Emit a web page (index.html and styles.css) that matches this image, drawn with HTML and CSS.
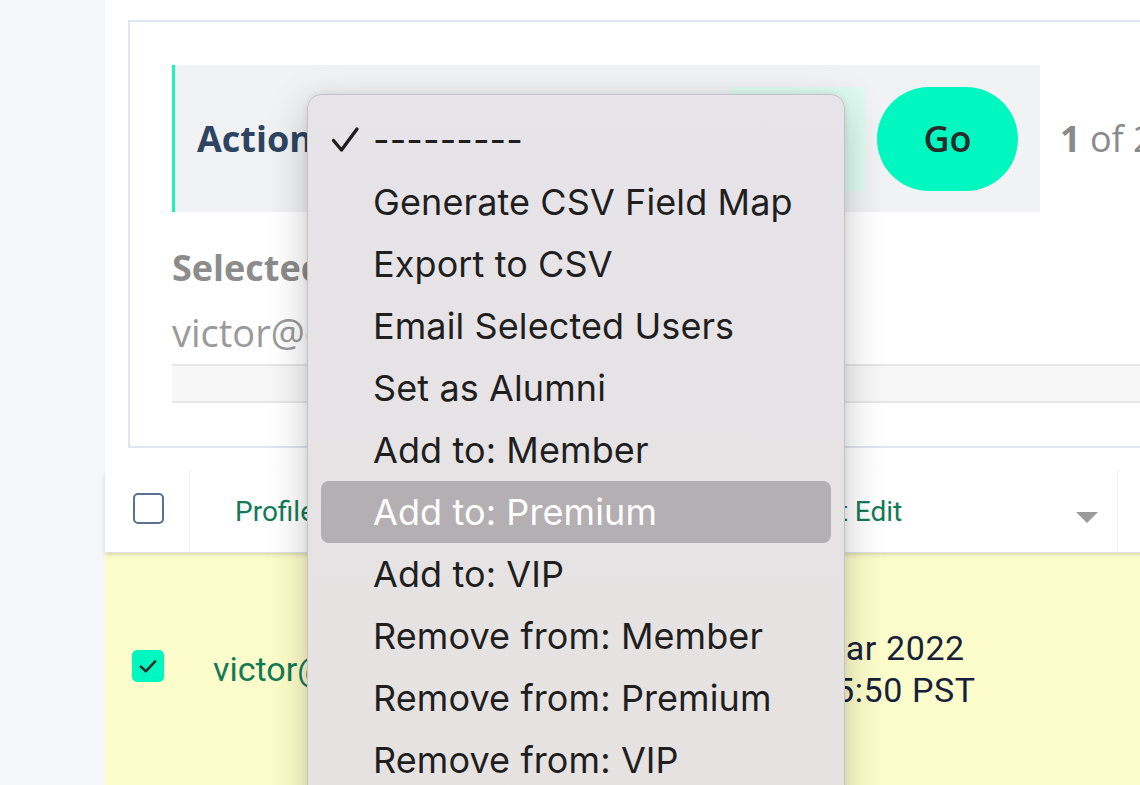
FILE: index.html
```html
<!DOCTYPE html>
<html lang="en">
<head>
<meta charset="utf-8">
<title>Users</title>
<link rel="stylesheet" href="styles.css">
</head>
<body>
<div class="page">
  <aside class="sidebar"></aside>
  <main class="main">
    <section class="card">
      <div class="toolbar">
        <div class="actionbar">
          <span class="action-label">Action:</span>
          <span class="select"></span>
          <button class="go">Go</button>
        </div>
        <div class="counter"><b>1</b> of 2 selected</div>
      </div>
      <h2 class="selected-title">Selected users</h2>
      <div class="selected-email">victor@example.com</div>
      <div class="selected-box"></div>
    </section>

    <div class="thead">
      <div class="th th-check"><span class="cb"></span></div>
      <div class="th th-profile">Profile</div>
      <div class="th th-edit"><span>Last Edit</span><span class="tri"></span></div>
      <div class="th th-rest"></div>
    </div>

    <div class="trow">
      <div class="td td-check"><span class="cb cb-on"><svg viewBox="0 0 20 20" width="22" height="22"><path d="M3.5 10.5 L8 14.8 L16.5 5.8" fill="none" stroke="#2b2b2b" stroke-width="2.3" stroke-linecap="round" stroke-linejoin="round"/></svg></span></div>
      <div class="td td-profile">victor@example.com</div>
      <div class="td td-date"><span>12 Mar 2022</span><span>14:45:50 PST</span></div>
    </div>
  </main>

  <div class="menu">
    <div class="item checked">
      <svg class="check" viewBox="0 0 30 28" width="30" height="28"><path d="M3.5 14.5 L11.5 24 L27 3" fill="none" stroke="#1f1f1f" stroke-width="3.4" stroke-linecap="round" stroke-linejoin="round"/></svg>
      ---------
    </div>
    <div class="item">Generate CSV Field Map</div>
    <div class="item">Export to CSV</div>
    <div class="item">Email Selected Users</div>
    <div class="item">Set as Alumni</div>
    <div class="item">Add to: Member</div>
    <div class="item active">Add to: Premium</div>
    <div class="item">Add to: VIP</div>
    <div class="item">Remove from: Member</div>
    <div class="item">Remove from: Premium</div>
    <div class="item">Remove from: VIP</div>
  </div>
</div>
</body>
</html>
```

FILE: styles.css
```css
* { box-sizing: border-box; }
html, body { margin: 0; padding: 0; }
body {
  width: 1140px;
  height: 785px;
  overflow: hidden;
  background: #ffffff;
  font-family: "Open Sans", "Liberation Sans", sans-serif;
}
.page {
  display: flex;
  width: 1140px;
  height: 785px;
  position: relative;
  overflow: hidden;
}
.sidebar {
  width: 105px;
  flex: none;
  background: #f5f6fa;
}
.main {
  flex: none;
  width: 1300px;
  background: #fff;
  padding-top: 20px;
  display: flex;
  flex-direction: column;
}
.card {
  margin-left: 23px;
  width: 1250px;
  border: 2px solid #dfe6f1;
  padding: 43px 0 43px 42px;
}
.toolbar {
  display: flex;
  align-items: center;
  gap: 20px;
}
.actionbar {
  flex: none;
  width: 868px;
  height: 147px;
  background: #f1f2f4;
  border-left: 3px solid #1ff2bb;
  display: flex;
  align-items: center;
  padding: 0 22px;
}
.action-label {
  font-weight: 700;
  font-size: 36px;
  color: #2e4461;
  flex: 1;
}
.select {
  flex: none;
  width: 136px;
  height: 104px;
  background: #dffbf1;
}
.go {
  flex: none;
  margin-left: 11px;
  width: 141px;
  height: 104px;
  border: none;
  border-radius: 52px;
  background: #00f8c0;
  font-family: "Open Sans", "Liberation Sans", sans-serif;
  font-weight: 600;
  font-size: 36px;
  color: #2a2a2a;
  padding: 0;
}
.counter {
  flex: none;
  font-size: 36px;
  color: #8a8a8a;
  white-space: nowrap;
}
.counter b { font-weight: 700; }
.selected-title {
  margin: 32px 0 0;
  font-size: 36px;
  line-height: 48px;
  font-weight: 700;
  color: #8c8c8c;
}
.selected-email {
  margin-top: 16px;
  font-size: 38px;
  line-height: 48px;
  color: #9a9a9a;
}
.selected-box {
  margin-top: 8px;
  height: 39px;
  background: #f7f7f7;
  border-top: 2px solid #e6e6e6;
  border-bottom: 2px solid #e6e6e6;
}

.thead {
  margin-top: 22px;
  height: 82px;
  display: flex;
  background: #fff;
  box-shadow: 0 3px 4px rgba(0,0,0,0.14);
  position: relative;
  z-index: 1;
  font-family: Roboto, "Liberation Sans", sans-serif;
}
.th {
  display: flex;
  align-items: center;
  font-size: 28px;
  color: #137a57;
}
.th-check {
  width: 85px;
  padding-left: 28px;
  border-right: 1px solid #f1f1f1;
  padding-bottom: 5px;
}
.th-profile {
  width: 588px;
  padding-left: 45px;
}
.th-edit {
  width: 340px;
  padding-left: 16px;
  padding-right: 19px;
  justify-content: space-between;
  border-right: 1px solid #f1f1f1;
}
.tri {
  width: 0;
  height: 0;
  border-left: 11.5px solid transparent;
  border-right: 11.5px solid transparent;
  border-top: 11px solid #9a9a9a;
  margin-top: 12px;
}
.th-rest { flex: 1; }
.cb {
  display: inline-flex;
  align-items: center;
  justify-content: center;
  width: 31px;
  height: 31px;
  border: 2px solid #5b6f8f;
  border-radius: 5px;
  background: #fff;
}
.cb-on {
  border: none;
  background: #00f8c0;
  width: 32px;
  height: 32px;
}

.trow {
  margin-top: 1px;
  height: 232px;
  display: flex;
  align-items: center;
  background: #fdfdcb;
  font-family: Roboto, "Liberation Sans", sans-serif;
}
.td-check {
  width: 85px;
  padding-left: 27px;
  display: flex;
  align-items: center;
  padding-bottom: 6px;
}
.td-profile {
  width: 577px;
  padding-left: 23px;
  font-size: 34px;
  color: #137a57;
}
.td-date {
  width: 400px;
  display: flex;
  flex-direction: column;
  font-size: 34px;
  line-height: 42px;
  letter-spacing: 0.6px;
  color: #17223a;
}

.menu {
  position: absolute;
  left: 307px;
  top: 94px;
  width: 538px;
  height: 740px;
  border: 1px solid #c4c2c6;
  border-radius: 14px;
  background: linear-gradient(#e7e4ea, #e6e2e0);
  box-shadow: 0 12px 40px rgba(0,0,0,0.22), 0 0 6px rgba(0,0,0,0.08);
  padding-top: 14px;
  z-index: 5;
  font-family: Inter, "Liberation Sans", sans-serif;
}
.item {
  position: relative;
  height: 62px;
  margin: 0 13px;
  padding-left: 52px;
  display: flex;
  align-items: center;
  font-size: 36px;
  letter-spacing: 0.1px;
  color: #1f1f1f;
  border-radius: 8px;
  white-space: nowrap;
}
.item.active {
  background: #b3afb3;
  color: #fff;
}
.check {
  position: absolute;
  left: 9px;
  top: 17px;
}
```
